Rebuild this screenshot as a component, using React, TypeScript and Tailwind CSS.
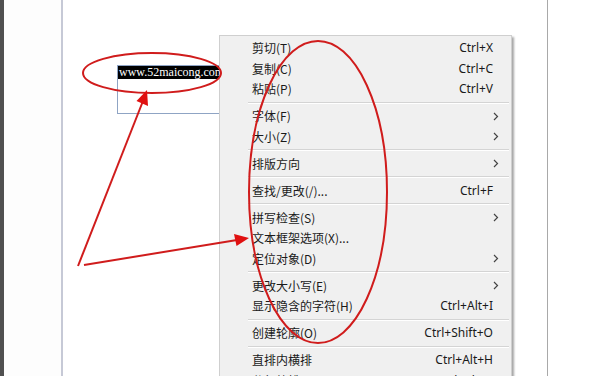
import React from 'react';

type Item =
    | { kind: 'item'; label: string; shortcut?: string; sub?: boolean }
    | { kind: 'sep' };

const items: Item[] = [
    { kind: 'item', label: '剪切(T)', shortcut: 'Ctrl+X' },
    { kind: 'item', label: '复制(C)', shortcut: 'Ctrl+C' },
    { kind: 'item', label: '粘贴(P)', shortcut: 'Ctrl+V' },
    { kind: 'sep' },
    { kind: 'item', label: '字体(F)', sub: true },
    { kind: 'item', label: '大小(Z)', sub: true },
    { kind: 'sep' },
    { kind: 'item', label: '排版方向', sub: true },
    { kind: 'sep' },
    { kind: 'item', label: '查找/更改(/)...', shortcut: 'Ctrl+F' },
    { kind: 'sep' },
    { kind: 'item', label: '拼写检查(S)', sub: true },
    { kind: 'item', label: '文本框架选项(X)...' },
    { kind: 'item', label: '定位对象(D)', sub: true },
    { kind: 'sep' },
    { kind: 'item', label: '更改大小写(E)', sub: true },
    { kind: 'item', label: '显示隐含的字符(H)', shortcut: 'Ctrl+Alt+I' },
    { kind: 'sep' },
    { kind: 'item', label: '创建轮廓(O)', shortcut: 'Ctrl+Shift+O' },
    { kind: 'sep' },
    { kind: 'item', label: '直排内横排', shortcut: 'Ctrl+Alt+H' },
    { kind: 'item', label: '分行缩排', shortcut: 'Ctrl+Alt+Z' },
];

const Chevron: React.FC = () => (
    <svg width="6" height="9" viewBox="0 0 6 9" className="text-[#444]">
        <path d="M1 1l3.5 3.5L1 8" fill="none" stroke="currentColor" strokeWidth="1.2" />
    </svg>
);

const ContextMenu: React.FC = () => (
    <div className="absolute left-[219px] top-[35px] w-[293px] bg-[#f0f0f0] border border-[#cfcfcf] shadow-[2px_2px_2px_rgba(0,0,0,0.35)] pt-[2px] pb-2">
        {items.map((it, i) =>
            it.kind === 'sep' ? (
                <div key={i} className="h-[6.5px] flex items-center pl-[28px] pr-[2px]">
                    <div className="w-full border-t border-[#d4d4d4] border-b border-b-white" />
                </div>
            ) : (
                <div key={i} className="h-[20.5px] flex items-center pl-[32px] pr-[12px] text-[12px] text-[#1a1a1a]">
                    <span className="flex-1 font-['Noto_Sans_CJK_SC',sans-serif] leading-none">{it.label}</span>
                    {it.shortcut && (
                        <span className="font-['Noto_Sans',sans-serif] leading-none mr-[6px]">{it.shortcut}</span>
                    )}
                    {it.sub && <Chevron />}
                </div>
            )
        )}
    </div>
);

const Annotations: React.FC = () => (
    <svg className="absolute inset-0 pointer-events-none" width="600" height="376" viewBox="0 0 600 376">
        <g fill="none" stroke="#d01c1c" strokeWidth="2">
            <ellipse cx="152" cy="73" rx="69" ry="20" />
            <ellipse cx="318" cy="192" rx="69" ry="151" />
            <line x1="78" y1="266" x2="143" y2="101" />
            <line x1="84" y1="265" x2="237" y2="240" />
        </g>
        <g fill="#e01010">
            <polygon points="147,90 148,106 136.5,101" />
            <polygon points="249,238 236.5,246 234,234" />
        </g>
    </svg>
);

export default function App() {
    return (
        <div className="relative w-[600px] h-[376px] overflow-hidden bg-white flex">
            <div className="w-[4px] bg-[#505050]" />
            <div className="w-[57px] bg-[#fdfdfd]" />
            <div className="w-[2px] bg-[#c6c9d6]" />
            <div className="relative w-[484px] bg-white">
                {/* text frame on the page */}
                <div className="absolute left-[54px] top-[65px] w-[140px] h-[49px] border border-[#8fa4c4]">
                    <span className="block w-fit bg-black text-white font-['Liberation_Serif',serif] text-[12px] leading-[13px] px-[1px]">
                        www.52maicong.com
                    </span>
                </div>
            </div>
            <div className="w-[1px] bg-[#a9a9a9]" />
            <div className="flex-1 bg-white" />
            <ContextMenu />
            <Annotations />
        </div>
    );
}
